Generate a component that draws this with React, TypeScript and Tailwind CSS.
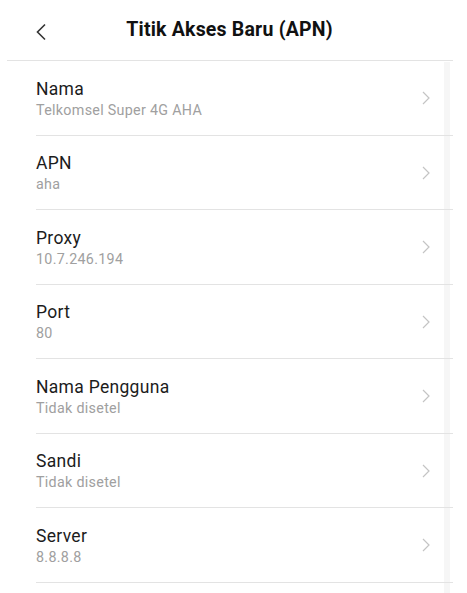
import React from "react";

interface IField {
  label: string;
  value: string;
  height: string;
}

const fields: IField[] = [
  { label: "Nama", value: "Telkomsel Super 4G AHA", height: "h-[75px]" },
  { label: "APN", value: "aha", height: "h-[74px]" },
  { label: "Proxy", value: "10.7.246.194", height: "h-[75px]" },
  { label: "Port", value: "80", height: "h-[74px]" },
  { label: "Nama Pengguna", value: "Tidak disetel", height: "h-[75px]" },
  { label: "Sandi", value: "Tidak disetel", height: "h-[74px]" },
  { label: "Server", value: "8.8.8.8", height: "h-[75px]" },
];

const ChevronLeft = () => (
  <svg width="12" height="18" viewBox="0 0 12 18" fill="none">
    <path d="M10 1.5 L2.5 9 L10 16.5" stroke="#333" strokeWidth="1.6" />
  </svg>
);

const ChevronRight = () => (
  <svg width="8" height="14" viewBox="0 0 8 14" fill="none">
    <path d="M1 1 L7 7 L1 13" stroke="#c4c4c4" strokeWidth="1.2" />
  </svg>
);

const FieldRow: React.FC<IField> = ({ label, value, height }) => {
  return (
    <div className={`${height} ml-[36px] mr-[14px] border-b border-[#e3e3e3] flex items-center justify-between`}>
      <div className="flex flex-col">
        <p className="text-[17.5px] leading-[22px] tracking-[0.3px] text-[#1c1c1c]">{label}</p>
        <p className="mt-[1px] text-[14.3px] leading-[18px] tracking-[0.3px] text-[#a0a0a0]">{value}</p>
      </div>
      <div className="mr-[23px] flex items-center">
        <ChevronRight />
      </div>
    </div>
  );
};

export default function App() {
  return (
    <div className="w-[467px] h-[593px] bg-white overflow-hidden font-['Roboto',sans-serif]">
      <div className="h-[60px] relative flex items-center justify-center pr-[8px]">
        <button className="absolute left-[35px] top-[23px]">
          <ChevronLeft />
        </button>
        <h1 className="text-[19.5px] font-bold tracking-[0.2px] text-[#111]">Titik Akses Baru (APN)</h1>
      </div>

      <div className="relative">
        <div className="ml-[7px] mr-[14px] border-t border-[#e3e3e3]" />
        <div className="absolute right-[17px] top-[2px] w-[6px] h-[600px] bg-[#f6f6f6]" />
        <div className="relative">
          {fields.map((f) => (
            <FieldRow key={f.label} {...f} />
          ))}
        </div>
      </div>
    </div>
  );
}
